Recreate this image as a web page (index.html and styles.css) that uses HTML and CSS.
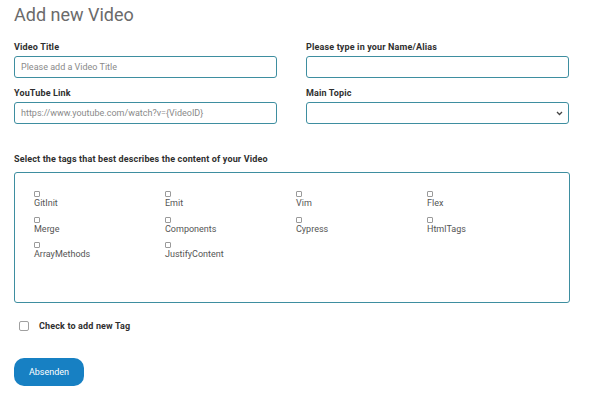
FILE: index.html
```html
<!DOCTYPE html>
<html>
<head>
<meta charset="utf-8">
<link rel="stylesheet" href="styles.css">
</head>
<body>
<div class="page">
  <h1 class="title">Add new Video</h1>
  <div class="grid">
    <div class="field">
      <label class="label">Video Title</label>
      <input class="input" type="text" placeholder="Please add a Video Title">
    </div>
    <div class="field">
      <label class="label">Please type in your Name/Alias</label>
      <input class="input" type="text">
    </div>
    <div class="field">
      <label class="label">YouTube Link</label>
      <input class="input" type="text" placeholder="https://www.youtube.com/watch?v={VideoID}">
    </div>
    <div class="field">
      <label class="label">Main Topic</label>
      <div class="select">
        <svg class="chev" width="7" height="5" viewBox="0 0 7 5"><path d="M1 1 L3.5 3.5 L6 1" fill="none" stroke="#444" stroke-width="1.3"/></svg>
      </div>
    </div>
  </div>
  <div class="label tags-label">Select the tags that best describes the content of your Video</div>
  <div class="tags">
    <div class="tag"><span class="cb"></span><span class="tname">GitInit</span></div>
    <div class="tag"><span class="cb"></span><span class="tname">Emit</span></div>
    <div class="tag"><span class="cb"></span><span class="tname">Vim</span></div>
    <div class="tag"><span class="cb"></span><span class="tname">Flex</span></div>
    <div class="tag"><span class="cb"></span><span class="tname">Merge</span></div>
    <div class="tag"><span class="cb"></span><span class="tname">Components</span></div>
    <div class="tag"><span class="cb"></span><span class="tname">Cypress</span></div>
    <div class="tag"><span class="cb"></span><span class="tname">HtmlTags</span></div>
    <div class="tag"><span class="cb"></span><span class="tname">ArrayMethods</span></div>
    <div class="tag"><span class="cb"></span><span class="tname">JustifyContent</span></div>
  </div>
  <div class="newtag">
    <span class="bigcb"></span>
    <span class="label">Check to add new Tag</span>
  </div>
  <button class="btn">Absenden</button>
</div>
</body>
</html>
```

FILE: styles.css
```css
* { box-sizing: border-box; }
body {
  margin: 0;
  background: #fff;
  font-family: Roboto, "Liberation Sans", sans-serif;
  color: #333;
}
.page {
  padding: 3px 0 0 14px;
  width: 570px;
}
.title {
  margin: 0;
  font-size: 18px;
  font-weight: 400;
  color: #6b6b6b;
  line-height: 24px;
}
.grid {
  display: grid;
  grid-template-columns: 263px 263px;
  column-gap: 29px;
  row-gap: 9px;
  margin-top: 14px;
}
.field {
  display: flex;
  flex-direction: column;
  gap: 3px;
}
.label {
  font-size: 9px;
  font-weight: 700;
  color: #2f2f2f;
  line-height: 12px;
  letter-spacing: 0.15px;
}
.input, .select {
  height: 22px;
  border: 1px solid #3e8ea0;
  border-radius: 3px;
  background: #fff;
  font-family: inherit;
  font-size: 9px;
  padding: 0 6px;
  color: #333;
  outline: none;
}
.input::placeholder { color: #8a8a8a; }
.select {
  display: flex;
  align-items: center;
  justify-content: flex-end;
  padding-right: 5px;
}
.tags-label {
  margin-top: 29px;
}
.tags {
  margin-top: 7px;
  height: 131px;
  border: 1px solid #3e8ea0;
  border-radius: 3px;
  padding: 17px 0 0 19px;
  display: grid;
  grid-template-columns: repeat(4, 131px);
  grid-auto-rows: 25.5px;
  align-content: start;
}
.tag {
  display: flex;
  flex-direction: column;
  align-items: flex-start;
}
.cb {
  width: 6px;
  height: 6px;
  border: 1px solid #9a9a9a;
  border-radius: 1px;
  margin-top: 1px;
}
.tname {
  font-size: 9px;
  color: #555;
  line-height: 12px;
}
.newtag {
  display: flex;
  align-items: center;
  gap: 10px;
  margin-top: 17px;
  padding-left: 5px;
}
.bigcb {
  width: 10px;
  height: 10px;
  border: 1px solid #a0a0a0;
  border-radius: 2px;
}
.btn {
  margin-top: 26px;
  width: 70px;
  height: 28px;
  border: none;
  border-radius: 10px;
  background: #1780c3;
  color: #fff;
  font-family: inherit;
  font-size: 9px;
  padding: 0;
}
```
